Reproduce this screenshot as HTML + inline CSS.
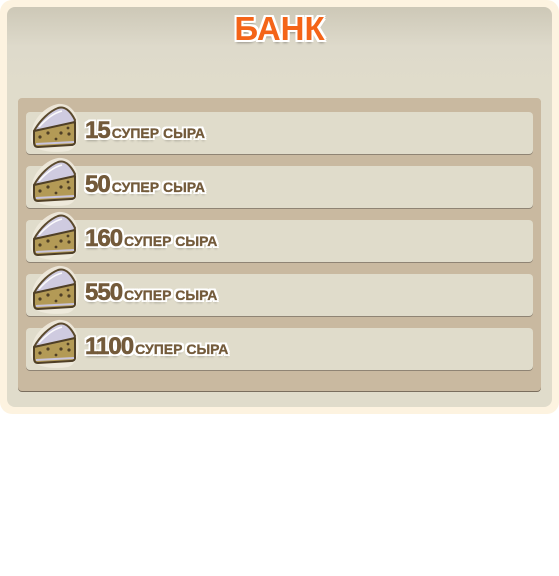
<!DOCTYPE html>
<html><head><meta charset="utf-8"><style>
*{margin:0;padding:0;box-sizing:border-box}
body{width:559px;height:576px;background:#fff;position:relative;overflow:hidden;font-family:"Liberation Sans",sans-serif}
.outer{position:absolute;left:0;top:0;width:559px;height:414px;background:#fdf3e0;border-radius:12px}
.inner{position:absolute;left:7px;top:7px;width:545px;height:400px;border-radius:8px;background:linear-gradient(#cdc8b7 0px,#dedacb 40px,#e0dccb 80px)}
.title{position:absolute;left:0;width:559px;top:10px;text-align:center;font-weight:bold;font-size:33px;color:#f46418;text-shadow:-2px -2px 0 #fff,2px -2px 0 #fff,-2px 2px 0 #fff,2px 2px 0 #fff,0 -2px 0 #fff,0 2px 0 #fff,-2px 0 0 #fff,2px 0 0 #fff,0 3px 2px rgba(0,0,0,.3)}
.tan{position:absolute;left:18px;top:98px;width:523px;height:293px;background:#c9b9a0;border-radius:4px;box-shadow:0 1px 0 #7a6e5e}
.row{position:absolute;left:26px;width:507px;height:42px;background:#e0dccb;border-radius:4px;box-shadow:0 1px 0 #8f8474}
.ic{position:absolute;left:2px;top:-12px;width:54px;height:54px}
.txt{position:absolute;left:59px;top:5px;white-space:nowrap;color:#735a3a;font-weight:bold;text-shadow:-2px -2px 0 #fff,2px -2px 0 #fff,-2px 2px 0 #fff,2px 2px 0 #fff,0 -2px 0 #fff,0 2px 0 #fff,-2px 0 0 #fff,2px 0 0 #fff,0 3px 2px rgba(0,0,0,.25)}
.n{font-size:24px;letter-spacing:-1px;-webkit-text-stroke:.6px #735a3a}
.s{font-size:14px;margin-left:2px;-webkit-text-stroke:.3px #735a3a}
</style></head><body>
<div class="outer"></div>
<div class="inner"></div>
<div class="title">БАНК</div>
<div class="tan"></div>
<svg width="0" height="0" style="position:absolute"><defs>
<g id="ch">
<path d="M4 30 C6 18 18 6 30 4 C40 3 48 10 50 22 C52 34 50 48 40 51 C28 53 12 52 6 46 C2 42 2 36 4 30Z" fill="#efeadd" opacity=".9"/>
<path d="M6 31 C12 20 22 11 30 8 C36 6 42 10 47 20 L46 24 Z" fill="#cfcbe0" stroke="#5b4a2e" stroke-width="2" stroke-linejoin="round"/>
<path d="M6 31 L47 22 L47 42 C47 44 45 45 43 45 L10 47 C7 47 6 45 6 42Z" fill="#b39a56" stroke="#4f3f26" stroke-width="2" stroke-linejoin="round"/>
<path d="M11 27 C18 19 26 13 34 11" stroke="#fff" stroke-width="1.6" fill="none" opacity=".9"/>
<path d="M8 44 L46 42" stroke="#c9c4dc" stroke-width="2"/>
<circle cx="12" cy="37" r="1.6" fill="#4f3f26"/><circle cx="20" cy="33" r="1.6" fill="#4f3f26"/>
<circle cx="33" cy="33" r="1.6" fill="#4f3f26"/><circle cx="41" cy="34" r="1.6" fill="#4f3f26"/>
<circle cx="28" cy="39" r="1.4" fill="#4f3f26"/><circle cx="40" cy="28" r="1.4" fill="#4f3f26"/>
</g></defs></svg>
<div class="row" style="top:112px"><svg class="ic" viewBox="0 0 54 54"><use href="#ch"/></svg><div class="txt"><span class="n">15</span><span class="s">СУПЕР СЫРА</span></div></div>
<div class="row" style="top:166px"><svg class="ic" viewBox="0 0 54 54"><use href="#ch"/></svg><div class="txt"><span class="n">50</span><span class="s">СУПЕР СЫРА</span></div></div>
<div class="row" style="top:220px"><svg class="ic" viewBox="0 0 54 54"><use href="#ch"/></svg><div class="txt"><span class="n">160</span><span class="s">СУПЕР СЫРА</span></div></div>
<div class="row" style="top:274px"><svg class="ic" viewBox="0 0 54 54"><use href="#ch"/></svg><div class="txt"><span class="n">550</span><span class="s">СУПЕР СЫРА</span></div></div>
<div class="row" style="top:328px"><svg class="ic" viewBox="0 0 54 54"><use href="#ch"/></svg><div class="txt"><span class="n">1100</span><span class="s">СУПЕР СЫРА</span></div></div>
</body></html>
